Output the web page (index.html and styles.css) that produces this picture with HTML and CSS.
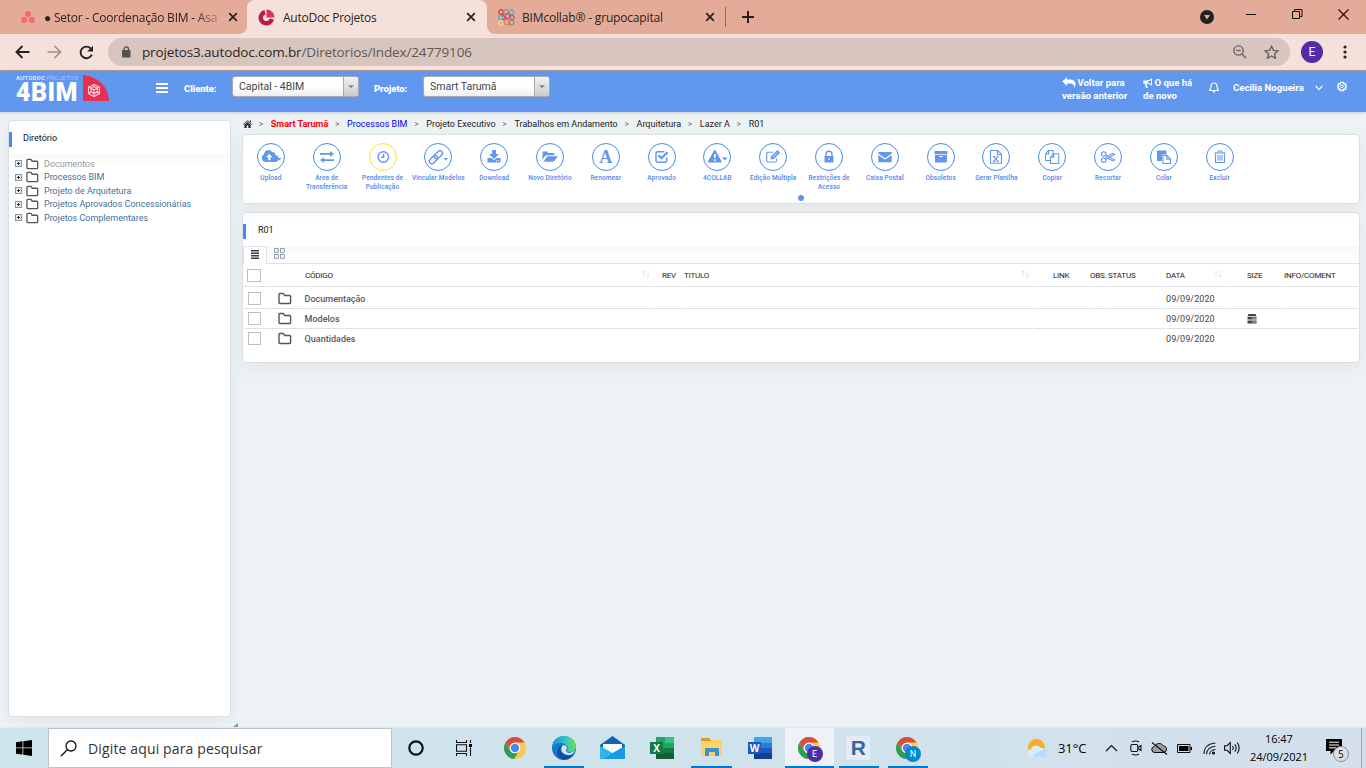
FILE: index.html
```html
<!DOCTYPE html>
<html lang="pt-BR">
<head>
<meta charset="utf-8">
<title>AutoDoc Projetos</title>
<link rel="stylesheet" href="styles.css">
</head>
<body>
<svg class="defs" width="0" height="0">
  <defs>
    <symbol id="folder" viewBox="0 0 14 13"><path d="M1.8 1.5h3.6l1.2 2h5q1 0 1 1v6q0 1-1 1h-9.600q-1 0-1-1v-8q0-1 .8-1z" fill="none" stroke="#555" stroke-width="1.400"/></symbol>
    <symbol id="close" viewBox="0 0 10 10"><path d="M1.2 1.2l7.600 7.600M8.800 1.2L1.2 8.800" stroke="#222" stroke-width="1.700"/></symbol>
    <symbol id="caret" viewBox="0 0 8 5"><path d="M0 0h8L4 4z" fill="currentColor"/></symbol>
    <symbol id="chrome" viewBox="0 0 24 24">
      <circle cx="12" cy="12" r="11" fill="#fbc84b"/>
      <path d="M2.500 6.500A11 11 0 0 1 21.500 6.500H12A5.500 5.500 0 0 0 7 14.500z" fill="#dc4b40"/>
      <path d="M2.500 6.500A11 11 0 0 0 11 23l5-8a5.500 5.500 0 0 1-9-.3z" fill="#24a05a"/>
      <circle cx="12" cy="12" r="5.300" fill="#fff"/><circle cx="12" cy="12" r="4.200" fill="#4687f2"/>
    </symbol>
    <symbol id="sort" viewBox="0 0 8 8"><path d="M2 7V1M.8 2.300L2 1l1.200 1.300M6 1v6M4.800 5.700L6 7l1.200-1.300" fill="none" stroke="#dcdfe2" stroke-width=".8"/></symbol>
  </defs>
</svg>

<div class="tabstrip">
  <div class="tab tab-first">
    <svg width="14" height="12" viewBox="0 0 14 12" fill="#f5696c"><circle cx="7" cy="3" r="3"/><circle cx="3.200" cy="9" r="3"/><circle cx="10.800" cy="9" r="3"/></svg>
    <span class="tab-text t-setor">● Setor - Coordenação BIM - Asa</span>
    <svg width="10" height="10"><use href="#close"/></svg>
  </div>
  <div class="tab tab-active">
    <svg width="17" height="17" viewBox="0 0 17 17"><path d="M7 3.300A5.600 5.600 0 1 0 13.800 10" fill="none" stroke="#b91c4c" stroke-width="4.500"/><path d="M8.500 0.500A8 8 0 0 1 16.500 8.500H8.500z" fill="#e23252"/></svg>
    <span class="tab-text t-auto">AutoDoc Projetos</span>
    <svg width="10" height="10"><use href="#close"/></svg>
  </div>
  <div class="tab tab-third">
    <svg width="17" height="17" viewBox="0 0 17 17" fill="none" stroke-width="1.200"><g stroke="#d6334e"><circle cx="3" cy="3" r="2.300"/><path d="M4 5l4 4-3 2"/></g><g stroke="#7ba05b"><circle cx="8" cy="3" r="2.300"/><circle cx="13.500" cy="13.500" r="2.300"/></g><g stroke="#53aebc"><circle cx="13.500" cy="3" r="2.300"/><circle cx="2.600" cy="8.500" r="2.100"/></g><g stroke="#b75c91"><circle cx="9.500" cy="7" r="2.300"/><circle cx="14" cy="8.500" r="2.100"/></g><g stroke="#f3cf86"><circle cx="3" cy="14" r="2.300"/></g><circle cx="8.500" cy="13" r="2.500" stroke="#ec7068"/></svg>
    <span class="tab-text t-bim">BIMcollab® - grupocapital</span>
    <svg width="10" height="10"><use href="#close"/></svg>
  </div>
  <div class="tab-sep"></div>
  <svg class="newtab" width="12" height="12" viewBox="0 0 12 12"><path d="M6 0v12M0 6h12" stroke="#222" stroke-width="2"/></svg>
  <div class="window-tools">
    <svg width="14" height="14" viewBox="0 0 14 14"><circle cx="7" cy="7" r="7" fill="#222"/><path d="M4 5h6L7 9.500z" fill="#e4ab99"/></svg>
    <svg class="wt-min" width="10" height="10" viewBox="0 0 10 10"><path d="M0 4.500h10" stroke="#111"/></svg>
    <svg class="wt-max" width="11" height="11" viewBox="0 0 11 11" fill="none" stroke="#111"><path d="M.5 2.500h7v7h-7zM2.500 2.500v-2h7.500v7H7.500"/></svg>
    <svg class="wt-close" width="11" height="11" viewBox="0 0 11 11"><path d="M.5.5l10 10M10.500.5l-10 10" stroke="#111" stroke-width="1.100"/></svg>
  </div>
</div>

<div class="navbar">
  <svg width="15" height="14" viewBox="0 0 15 14" fill="none" stroke="#222" stroke-width="1.900"><path d="M7.500 1L1.500 7l6 6M1.500 7H14.500"/></svg>
  <svg class="nb-fwd" width="15" height="14" viewBox="0 0 15 14" fill="none" stroke="#9c9390" stroke-width="1.700"><path d="M7.500 1l6 6-6 6M13.500 7H.5"/></svg>
  <svg class="nb-reload" width="15" height="15" viewBox="0 0 15 15"><path d="M12.800 9.600A5.800 5.800 0 1 1 11.600 3.400" fill="none" stroke="#222" stroke-width="1.900"/><path d="M14 .8v5.800H8.200z" fill="#222"/></svg>
  <div class="omnibox">
    <svg width="9" height="12" viewBox="0 0 9 12"><rect y="4" width="8.500" height="7.500" rx="1" fill="#54514f"/><path d="M2 4.500V3.200a2.250 2.250 0 0 1 4.500 0v1.300" fill="none" stroke="#54514f" stroke-width="1.300"/></svg>
    <span class="url">projetos3.autodoc.com.br<span>/Diretorios/Index/24779106</span></span>
    <svg class="ob-zoom" width="14" height="14" viewBox="0 0 14 14" fill="none" stroke="#6b6461" stroke-width="1.400"><circle cx="5.500" cy="5.500" r="4.600"/><path d="M9 9l4.200 4.200M3.300 5.500h4.400"/></svg>
    <svg width="15" height="14" viewBox="0 0 15 14" fill="none" stroke="#6b6461" stroke-width="1.400"><path d="M7.500 1.300l1.900 4.100 4.500.5-3.400 3 1 4.400-4-2.300-4 2.300 1-4.400-3.400-3 4.500-.5z"/></svg>
  </div>
  <div class="avatar">E</div>
  <svg width="4" height="14" viewBox="0 0 4 14" fill="#222"><circle cx="2" cy="2" r="1.600"/><circle cx="2" cy="7" r="1.600"/><circle cx="2" cy="12" r="1.600"/></svg>
</div>

<header class="app-header">
  <div class="logo">
    <div class="logo-words"><div class="logo-small"><b>AUTODOC</b> PROJETOS</div><div class="logo-big">4BIM</div></div>
    <svg width="26" height="26" viewBox="0 0 26 26"><path d="M0 0Q24 3 26 26H0z" fill="#e5314f"/><g fill="none" stroke="#fbd3da" stroke-width="1.100"><path d="M11 9.500l5.500 2.500v6.500L11 21.500l-5.500-3V12z"/><path d="M8 13l3-1.500 3.300 1.700v3.600L11 18.500l-3-1.700zM8 13l3 2 3.300-1.800M11 15v6.500M5.500 12l2.500 1M16.500 12l-2.200 1.200M5.500 18.500l2.500-1.700M16.500 18.500l-2.200-1.700M11 9.500v2"/></g></svg>
  </div>
  <div class="burger"><i></i><i></i><i></i></div>
  <label class="h-label l-client">Cliente:</label>
  <div class="select"><span>Capital - 4BIM</span><i><svg width="6" height="4"><use href="#caret"/></svg></i></div>
  <label class="h-label l-project">Projeto:</label>
  <div class="select"><span>Smart Tarumã</span><i><svg width="6" height="4"><use href="#caret"/></svg></i></div>
  <div class="h-right">
    <div class="h-link w-back"><svg width="14" height="11" viewBox="0 0 14 11"><path d="M5 0v2.500h3q5.500 0 5.500 4.800 0 1.800-1.300 3.500.2-4.300-4.200-4.300H5V9L.3 4.500z" fill="#fff"/></svg> Voltar para<br>versão anterior</div>
    <div class="h-link w-new"><svg width="10" height="10" viewBox="0 0 10 10"><path d="M9 .2v7.600Q6.500 5.800 4 5.600q-.8 1 .2 2 .3 1.200.8 1.900-1.300.8-2.200.2L2 5.800H.3V2.500h3.500Q6.500 2.200 9 .2z" fill="#fff"/><path d="M8 1.900v4.200Q6.500 5 5 4.800V3.300Q6.500 3 8 1.900z" fill="#6197ef"/></svg> O que há<br>de novo</div>
    <svg class="bell" width="10" height="11" viewBox="0 0 10 11" fill="none" stroke="#fff" stroke-width="1.100"><path d="M.5 8.500Q2 7 2 4q0-3 3-3t3 3q0 3 1.500 4.500zM4 9.500q1 1 2 0"/></svg>
    <span class="user">Cecilia Nogueira</span>
    <svg class="chev" width="8" height="6" viewBox="0 0 8 6"><path d="M.7 1L4 4.600 7.300 1" fill="none" stroke="#fff" stroke-width="1.200"/></svg>
    <svg class="gear" width="10" height="11" viewBox="0 0 11 11" fill="none" stroke="#fff"><path d="M4.200 1h2.600l.5 1.500 1.600-.2 1.200 2-1 1.200 1 1.200-1.200 2-1.600-.2-.5 1.500H4.200l-.5-1.500-1.600.2-1.200-2 1-1.200-1-1.200 1.200-2 1.600.2z" stroke-width="1.500"/><circle cx="5.500" cy="5.500" r="1.500"/></svg>
  </div>
</header>

<main class="content">
  <aside class="panel side">
    <div class="panel-title">Diretório</div>
    <ul class="tree">
      <li class="muted"><b></b><svg width="13" height="12"><use href="#folder"/></svg><span>Documentos</span></li>
      <li><b></b><svg width="13" height="12"><use href="#folder"/></svg><span>Processos BIM</span></li>
      <li><b></b><svg width="13" height="12"><use href="#folder"/></svg><span>Projeto de Arquitetura</span></li>
      <li><b></b><svg width="13" height="12"><use href="#folder"/></svg><span>Projetos Aprovados Concessionárias</span></li>
      <li><b></b><svg width="13" height="12"><use href="#folder"/></svg><span>Projetos Complementares</span></li>
    </ul>
    <i class="grip"></i>
  </aside>

  <section class="work">
    <nav class="crumbs">
      <svg width="9" height="8" viewBox="0 0 9 8"><path d="M4.500.2L9 4.200l-.5.5-4-3.500-4 3.500-.5-.5zM6.800.6h1.200v2.200L6.800 1.800zM1.300 4.700l3.200-2.800 3.200 2.800V8H5.300V5.500H3.700V8H1.300z" fill="#333"/></svg>
      <i>&gt;</i><span class="c-red">Smart Tarumã</span><i>&gt;</i><span class="c-blue">Processos BIM</span><i>&gt;</i><span>Projeto Executivo</span><i>&gt;</i><span>Trabalhos em Andamento</span><i>&gt;</i><span>Arquitetura</span><i>&gt;</i><span>Lazer A</span><i>&gt;</i><span>R01</span>
    </nav>

    <div class="panel actions">
      <div class="action-row">
        <div class="act"><div class="ring"><svg viewBox="0 0 28 28"><path d="M8.200 19a4 4 0 0 1-1.200-7.500 4.500 4.500 0 0 1 8.300-2.300 2.500 2.500 0 0 1 3 3.100A3.300 3.300 0 0 1 18 19z"/><path d="M12.300 10.800l3.200 3.500h-2.100v2.900h-2.200v-2.900H9.100z" fill="#fff"/><path d="M19.800 15h4.800l-2.400 2.400z"/></svg></div>Upload</div>
        <div class="act"><div class="ring"><svg viewBox="0 0 28 28"><path d="M7 10h10V8l4 2.900-4 2.900v-2H7zM21 16.200H11v-2l-4 2.900 4 2.900v-2h10z"/></svg></div>Área de<br>Transferência</div>
        <div class="act"><div class="ring pending"><svg viewBox="0 0 28 28"><circle cx="14.300" cy="14" r="5.200" class="line" stroke-width="1.900"/><path d="M14.600 10.800v3.500h-2.500" class="line"/></svg></div>Pendentes de<br>Publicação</div>
        <div class="act"><div class="ring"><svg viewBox="0 0 28 28"><g transform="rotate(-45 12 14)" class="line"><rect x="3.500" y="11.600" width="9.500" height="5" rx="2.500"/><rect x="10.500" y="11.600" width="9.500" height="5" rx="2.500"/></g><path d="M19.500 15h4.600l-2.300 2.400z"/></svg></div><span class="nw">Vincular Modelos</span></div>
        <div class="act"><div class="ring"><svg viewBox="0 0 28 28"><path d="M12 7h4v4h3l-5 5-5-5h3zM7.500 15h4l2.500 2.300 2.500-2.300h4v4.500h-13z"/><path d="M16 17.800h1M18 17.800h1" stroke="#fff"/></svg></div>Download</div>
        <div class="act"><div class="ring"><svg viewBox="0 0 28 28"><path d="M6.500 17V9.500q0-1 1-1h3.300q1 0 1 1v.5h5.500q1 0 1 1v1.300H11q-1.500 0-2.300 1.200z"/><path d="M7.500 18.800l3-4.500q.7-1 1.700-1h8.800q.8 0 .2 1l-3 3.700q-.7.800-1.500.8z"/></svg></div>Novo Diretório</div>
        <div class="act"><div class="ring letter">A</div>Renomear</div>
        <div class="act"><div class="ring"><svg viewBox="0 0 28 28"><path d="M18.800 14.500v2.900q0 1.800-1.800 1.800H9.800Q8 19.200 8 17.400V10.600q0-1.800 1.800-1.800h6.500" class="line"/><path d="M10.500 12.200l3 3 6-6" class="line thick"/></svg></div>Aprovado</div>
        <div class="act"><div class="ring"><svg viewBox="0 0 28 28"><path d="M11.800 7.500l6.200 11.300H5.600z" stroke="#6197ef" stroke-width="1.500" stroke-linejoin="round"/><path d="M11.800 11v4M11.800 16.300v1.800" stroke="#fff" stroke-width="1.700"/><path d="M19 14.500h5.600l-2.800 2.900z"/></svg></div>4COLLAB</div>
        <div class="act"><div class="ring"><svg viewBox="0 0 28 28"><path d="M17.500 15.500v2q0 1.500-1.500 1.500H9.200q-1.500 0-1.500-1.500v-6.700q0-1.500 1.500-1.500H14" class="line fine"/><path d="M11.500 16.500l.5-3.200L18.500 7l2.700 2.700-6.500 6.300z"/><path d="M13.500 14.300l4.700-4.700" stroke="#fff" stroke-width=".8"/></svg></div><span class="nw">Edição Múltipla</span></div>
        <div class="act"><div class="ring"><svg viewBox="0 0 28 28"><path d="M9.500 13h9v6.500h-9z"/><path d="M11 13v-1.800a3 3 0 0 1 6 0V13" class="line"/><path d="M14 15v2" stroke="#fff"/></svg></div>Restrições de<br>Acesso</div>
        <div class="act"><div class="ring"><svg viewBox="0 0 28 28"><path d="M7.300 9h13.400v1.500L14 15.200l-6.700-4.700zM7.300 12l6.700 4.700 6.700-4.700v7.300H7.300z"/></svg></div>Caixa Postal</div>
        <div class="act"><div class="ring"><svg viewBox="0 0 28 28"><path d="M7.500 8h13v3.300h-13zM8 12h12v7.500H8z"/><path d="M12.500 13.500h3" stroke="#fff"/></svg></div>Obsoletos</div>
        <div class="act"><div class="ring"><svg viewBox="0 0 28 28"><path d="M8.500 7.500h7.200l3.800 3.800v9h-11zM15.500 7.500v4h4" class="line fine"/><path d="M11.700 13.300l4.200 5M15.900 13.300l-4.200 5M10.900 13.200h2.200M14.600 13.200h2.100M10.900 18.500h2.200M14.600 18.500h2.100" class="line fine"/></svg></div><span class="nw">Gerar Planilha</span></div>
        <div class="act"><div class="ring"><svg viewBox="0 0 28 28"><path d="M12.500 17.500H7.500V11l3-3.500h4.500v3.500M10.700 7.500V11H7.500M12.500 20.500v-6.300l3.200-3.400h5v9.700zM15.800 10.800v3.500h-3.300" class="line fine"/></svg></div>Copiar</div>
        <div class="act"><div class="ring"><svg viewBox="0 0 28 28"><g class="line fine"><circle cx="9.700" cy="11" r="2.200"/><circle cx="9.700" cy="17.200" r="2.200"/><path d="M11.600 12l9 5-1.500.9-7.500-3.600M11.600 16.200l9-5-1.500-.9-7.500 3.600"/></g></svg></div>Recortar</div>
        <div class="act"><div class="ring"><svg viewBox="0 0 28 28"><path d="M7 7.500h9.500v4H12V18H7z"/><path d="M13 12.500h4l3.500 3.500v4.500H13zM16.800 12.500v3.700h3.700" class="line fine"/></svg></div>Colar</div>
        <div class="act"><div class="ring"><svg viewBox="0 0 28 28"><path d="M8.500 10h11M9.500 10.200v9.300h9v-9.300M11.700 10l.7-2h3.200l.7 2M12 12v5.500M14 12v5.500M16 12v5.500" class="line fine"/></svg></div>Excluir</div>
      </div>
      <i class="dot"></i>
    </div>

    <div class="panel files">
      <div class="panel-title">R01</div>
      <div class="views">
        <div class="view active"><svg width="9" height="9" viewBox="0 0 9 9"><path d="M0 .8h8M0 3.300h8M0 5.800h8M0 8.200h8" stroke="#333b48" stroke-width="1.600"/></svg></div>
        <svg class="grid-ico" width="11" height="11" viewBox="0 0 11 11" fill="none" stroke="#8c99ad"><path d="M.5.5h3.800v3.800H.5zM6.500.5h3.800v3.800H6.500zM.5 6.500h3.800v3.800H.5zM6.500 6.500h3.800v3.800H6.500z"/></svg>
      </div>
      <div class="row head">
        <div><b class="check"></b></div><div></div><div>CÓDIGO<svg width="8" height="8"><use href="#sort"/></svg></div><div class="rev">REV</div><div>TITULO<svg width="8" height="8"><use href="#sort"/></svg></div><div class="link">LINK</div><div>OBS.</div><div>STATUS</div><div>DATA<svg width="8" height="8"><use href="#sort"/></svg></div><div class="size">SIZE</div><div>INFO/COMENT</div>
      </div>
      <div class="row r1"><div><b class="check"></b></div><div><svg width="14" height="13"><use href="#folder"/></svg></div><div class="name">Documentação</div><div></div><div></div><div></div><div></div><div></div><div class="date">09/09/2020</div><div></div><div></div></div>
      <div class="row r2"><div><b class="check"></b></div><div><svg width="14" height="13"><use href="#folder"/></svg></div><div class="name">Modelos</div><div></div><div></div><div></div><div></div><div></div><div class="date">09/09/2020</div><div class="size"><svg width="10" height="10" viewBox="0 0 10 10"><path d="M1.500 0h7L9.500 2H.5zM.5 2.800h9v2.700h-9zM.5 6.500h9v3h-9z" fill="#444"/><path d="M5 4.200h4M5 8h4" stroke="#bbb"/></svg></div><div></div></div>
      <div class="row r3"><div><b class="check"></b></div><div><svg width="14" height="13"><use href="#folder"/></svg></div><div class="name">Quantidades</div><div></div><div></div><div></div><div></div><div></div><div class="date">09/09/2020</div><div></div><div></div></div>
    </div>
  </section>
</main>

<footer class="taskbar">
  <div class="start"><svg width="16" height="16" viewBox="0 0 16 16"><path d="M0 2.200L6.500 1.300v6.200H0zM7.300 1.200L16 0v7.500H7.300zM0 8.300h6.500v6.300L0 13.700zM7.300 8.300H16V16l-8.700-1.300z"/></svg></div>
  <div class="search"><svg width="17" height="17" viewBox="0 0 17 17" fill="none" stroke="#111" stroke-width="1.300"><circle cx="11" cy="6" r="5"/><path d="M7.500 9.500L.8 16.200"/></svg><span>Digite aqui para pesquisar</span></div>
  <div class="task t48"><svg width="16" height="16" viewBox="0 0 16 16"><circle cx="8" cy="8" r="6.700" fill="none" stroke="#111" stroke-width="2.200"/></svg></div>
  <div class="task"><svg width="17" height="16" viewBox="0 0 17 16"><path d="M.5 0v2.500h10V0M.5 16v-2.500h10V16M.5 4.700h10v6.500H.5zM14.500 0v3M14.500 7.500V16" fill="none" stroke="#111" stroke-width="1.100"/><path d="M13 4h3v3h-3z"/></svg></div>
  <div class="task gap"><svg width="24" height="24"><use href="#chrome"/></svg></div>
  <div class="task open"><svg width="24" height="24" viewBox="0 0 24 24"><defs><linearGradient id="eg"><stop stop-color="#1595cf"/><stop offset=".55" stop-color="#35c4c9"/><stop offset="1" stop-color="#6be052"/></linearGradient></defs><circle cx="12" cy="12" r="12" fill="#1479ca"/><path d="M0 11.500C1 4 6 0 12 0s12 5 12 10.500-7 7-9.500 4.500Q17 13 15 10 12.500 6.500 8 7 3 7.500 0 11.500z" fill="url(#eg)"/><path d="M10 9Q6 17 13 19q6 1.500 9.500-2-4 7.500-12 6.500Q3 21 6 13q1.500-3 4-4z" fill="#134e99"/><path d="M10.500 9.500q4-1 4.500 3-2 2-.3 3.500 3 2.500 8.300-1.500-1 3-4 4.300-5 1-8.500-2.300-2.500-3.300 0-7z" fill="#d6e7ef"/></svg></div>
  <div class="task"><svg width="25" height="24" viewBox="0 0 25 24"><path d="M0 9L12.500 0 25 9v4H0z" fill="#1262af"/><path d="M3 8h19v6l-9.500 5L3 14z" fill="#f5fafd"/><path d="M0 10l12.500 7L25 10v13H0z" fill="#35b3ed"/><path d="M3.500 23L25 10v13z" fill="#199ae0"/></svg></div>
  <div class="task"><svg class="office" width="24" height="22" viewBox="0 0 24 22"><path d="M6 0h18v22H6z" fill="#21a366"/><path d="M15 0h9v6h-9z" fill="#33c481"/><path d="M6 11h18v6H6z" fill="#107c41"/><path d="M6 16h18v6H6z" fill="#185c37"/><path d="M0 5h13v12H0z" fill="#107c41"/><text x="6.500" y="14.500" text-anchor="middle">X</text></svg></div>
  <div class="task open"><svg width="23" height="20" viewBox="0 0 23 20"><path d="M1 0h8l2 2h11v5H1z" fill="#d99b1b"/><path d="M1 3h9l1.500-1H22v16H1z" fill="#fbd265"/><path d="M5 18v-7q0-1 1-1h12q1 0 1 1v7h-4v-4H9v4z" fill="#3a93d5"/></svg></div>
  <div class="task"><svg class="office" width="24" height="22" viewBox="0 0 24 22"><path d="M6 0h18v22H6z" fill="#2b7cd3"/><path d="M6 0h18v6H6z" fill="#41a5ee"/><path d="M6 11h18v6H6z" fill="#185abd"/><path d="M6 16h18v6H6z" fill="#103f91"/><path d="M0 5h13v12H0z" fill="#185abd"/><text x="6.500" y="14.500" text-anchor="middle">W</text></svg></div>
  <div class="task open current"><svg width="24" height="24"><use href="#chrome"/></svg><b class="badge purple">E</b></div>
  <div class="task open"><div class="revit">R</div></div>
  <div class="task open"><svg width="24" height="24"><use href="#chrome"/></svg><b class="badge blue">N</b></div>
  <div class="tray">
    <svg width="22" height="19" viewBox="0 0 22 19"><circle cx="10.500" cy="8.500" r="8.500" fill="#f9ac28"/><path d="M5.500 18.500a4.300 4.300 0 0 1-.5-8.500 5.500 5.500 0 0 1 9.800-1 4 4 0 0 1 5 4.200 3 3 0 0 1-1.500 5.300z" fill="#d7effb"/><path d="M7 18.500q0-5 5-5.500 4-1 6.500-4a4 4 0 0 1 1.300 4.200 3 3 0 0 1-1.500 5.300z" fill="#b5dff7"/></svg>
    <span class="temp">31°C</span>
    <svg class="t-up" width="13" height="8" viewBox="0 0 13 8"><path d="M1 7l5.500-5.500L12 7" fill="none" stroke="#111" stroke-width="1.200"/></svg>
    <svg class="t-cam" width="12" height="16" viewBox="0 0 12 16" fill="none" stroke="#111" stroke-width="1.100"><rect x=".8" y="4.500" width="7" height="7" rx="1.500"/><path d="M8 7.500l3-2v5l-3-2M2 1.800q3.500-1.500 7 0M2 14.200q3.500 1.500 7 0"/></svg>
    <svg class="t-cloud" width="17" height="13" viewBox="0 0 17 13"><path d="M4 10.500a3 3 0 0 1-.5-6 5 5 0 0 1 9-.5 3.300 3.300 0 0 1 .5 6.500z" fill="#9ba0a5" stroke="#111"/><path d="M1 .5l15 12" stroke="#111" stroke-width="1.200"/></svg>
    <svg class="t-bat" width="15" height="9" viewBox="0 0 15 9"><path d="M.5.500h12.500v8H.5z" fill="none" stroke="#111"/><path d="M2 2h9.500v5H2zM13.500 3H15v3h-1.500z"/></svg>
    <svg class="t-wifi" width="13" height="13" viewBox="0 0 13 13" fill="none" stroke="#222" stroke-width="1.100"><path d="M1 12Q1 2 12.500 1M3.500 12.300Q4 5 12.500 4.300M6.500 12.500Q7 8 12.500 7.500"/><circle cx="10.500" cy="11" r="1.600" fill="#111" stroke="none"/></svg>
    <svg class="t-vol" width="17" height="14" viewBox="0 0 17 14" fill="none" stroke="#111" stroke-width="1.100"><path d="M.6 4.700h2.500L6.300 1.500v11L3.100 9.300H.6zM8.500 5q1.500 2 0 4M10.800 3.300q2.700 3.700 0 7.400M13.200 1.500q4 5.500 0 11"/></svg>
    <div class="clock">16:47<br>24/09/2021</div>
    <div class="notes"><svg width="16" height="16" viewBox="0 0 16 16"><path d="M0 0h16v12H8l-3.500 3.500V12H0z"/><path d="M3 3.200h10M3 6h10M3 8.800h7" stroke="#fff"/></svg><b>5</b></div>
    <i class="desk"></i>
  </div>
</footer>
</body>
</html>
```
FILE: styles.css
```css
* { box-sizing: border-box; }
body { margin: 0; width: 1366px; height: 768px; overflow: hidden; display: flex; flex-direction: column; font-family: Roboto, sans-serif; background: #edf2f5; }
svg { flex: none; display: block; }
.defs { position: absolute; }
i, b { font-style: normal; }

.tabstrip { height: 34px; background: linear-gradient(#e4ab99 24px, #f6e1da 24px); display: flex; align-items: center; flex: none; }
.tab { height: 34px; display: flex; align-items: center; font: 12px "Open Sans", sans-serif; color: #2c2220; }
.tab-first { width: 247px; padding-left: 21px; border-radius: 0 0 8px 0; background: #e4ab99; }
.tab-text { white-space: nowrap; }
.t-setor { width: 176px; margin: 0 8px 0 9px; letter-spacing: -.22px; -webkit-mask-image: linear-gradient(90deg, #000 150px, rgba(0,0,0,.2)); mask-image: linear-gradient(90deg, #000 150px, rgba(0,0,0,.2)); }
.tab-active { width: 240px; padding-left: 11px; background: linear-gradient(#e4ab99 12px, #f6e1da 12px); position: relative; }
.tab-active::before { content: ""; position: absolute; inset: 0; border-radius: 8px 8px 0 0; background: #f6e1da; }
.tab-active > * { position: relative; }
.t-auto { width: 175px; margin: 0 8px 0 8px; letter-spacing: -.25px; }
.tab-third { width: 238px; padding-left: 11px; background: #e4ab99; border-radius: 0 0 0 8px; }
.t-bim { width: 175px; margin: 0 8px 0 7px; letter-spacing: -.17px; }
.tab-sep { width: 1px; height: 34px; background: linear-gradient(#e4ab99 7px, #95695b 7px, #95695b 27px, #e4ab99 27px); }
.newtab { box-sizing: content-box; padding: 11px 0 11px 16px; background: #e4ab99; }
.window-tools { flex: 1; height: 34px; background: #e4ab99; display: flex; justify-content: flex-end; align-items: center; padding-right: 17px; }
.wt-min { margin: -4px 0 0 32px; }
.wt-max { margin: -6px 0 0 36px; }
.wt-close { margin: -6px 0 0 35px; }

.navbar { height: 37px; background: #f6e1da; border-bottom: 1px solid #ac9b98; display: flex; align-items: center; padding-left: 15px; flex: none; }
.nb-fwd { margin-left: 17px; }
.nb-reload { margin-left: 17px; }
.omnibox { margin-left: 14px; width: 1182px; height: 28px; border-radius: 14px; background: #d7c5be; display: flex; align-items: center; padding-left: 14px; }
.url { margin-left: 11px; font: 13.500px "Open Sans", sans-serif; letter-spacing: -.15px; color: #2c2725; white-space: nowrap; }
.url span { color: #5f5854; }
.ob-zoom { margin-left: auto; margin-right: 17px; }
.omnibox > svg:last-child { margin-right: 11px; }
.avatar { width: 22px; height: 22px; margin: 0 20px 0 11px; border-radius: 50%; background: #512da8; color: #fff; font: 12px/22px Roboto, sans-serif; text-align: center; }

.app-header { height: 41px; background: #6197ef; display: flex; color: #fff; flex: none; position: relative; box-shadow: 0 1px 3px rgba(0,0,0,.15); }
.logo { width: 94px; margin-left: 16px; display: flex; padding-top: 4px; }
.logo-words { width: 67px; }
.logo-small { font-size: 6px; line-height: 7px; letter-spacing: .2px; color: #a5c4f7; white-space: nowrap; margin-top: -1px; }
.logo-small b { color: #dce8fc; }
.logo-big { font: 900 25px/23px Roboto, sans-serif; letter-spacing: .4px; white-space: nowrap; }
.burger { width: 12px; margin: 12px 0 0 46px; display: flex; flex-direction: column; gap: 2px; }
.burger i { height: 2px; background: #fff; }
.h-label { font-weight: 900; font-size: 9.500px; line-height: 12px; margin-top: 12px; letter-spacing: -.1px; white-space: nowrap; }
.l-client { width: 34px; margin-left: 16px; margin-right: 14px; }
.l-project { width: 34px; margin: 12px 15px 0 15px; }
.select { width: 127px; height: 21px; margin-top: 5px; display: flex; border: 1px solid #a9a9a9; border-radius: 3px; color: #444; font-size: 10.500px; line-height: 20px; background: linear-gradient(#fff, #fff 50%, #eee); overflow: hidden; }
.select span { flex: 1; padding-left: 6px; white-space: nowrap; }
.select i { width: 15px; border-left: 1px solid #a9a9a9; background: linear-gradient(#f2f2f2, #ccc); display: grid; place-items: center; color: #888; }
.h-right { margin-left: auto; display: flex; padding-right: 18px; font-size: 9.600px; font-weight: 700; }
.h-link { line-height: 13px; padding-top: 5px; white-space: nowrap; }
.h-link svg { display: inline; vertical-align: -2px; margin-right: -1px; }
.w-back { width: 81px; }
.w-new { width: 66px; }
.bell { margin-top: 11px; }
.user { margin: 11px 0 0 14px; width: 75px; white-space: nowrap; }
.chev { margin: 14px 0 0 7px; }
.gear { margin: 10px 1px 0 14px; }

.content { height: 615px; display: flex; padding: 0 6px 0 8px; }
.panel { background: #fff; border: 1px solid #dcdfe1; border-radius: 4px; box-shadow: 0 5px 15px rgba(80,100,110,.07); }
.panel-title { font-size: 9px; line-height: 34px; height: 33px; padding-left: 15px; color: #111; background: linear-gradient(#4689f5, #4689f5) 0 11px / 3px 15px no-repeat; }
.side { width: 223px; height: 597px; margin-top: 8px; position: relative; }
.side .panel-title { padding-left: 14px; }
.grip { position: absolute; right: -8px; bottom: -11px; border-left: 5px solid transparent; border-bottom: 4px solid #8b9398; }
.tree { list-style: none; margin: 0; padding: 3px 0 0 6px; background: linear-gradient(#f8f9f9, #fff 12px); }
.tree li { height: 13.500px; display: flex; align-items: center; font-size: 9px; color: #42719b; white-space: nowrap; letter-spacing: -.01px; }
.tree li.muted { color: #999; }
.tree b { width: 7px; height: 7px; border: 1px solid #8a97a5; background: linear-gradient(#333, #333) 1px 2px / 3px 1px no-repeat, linear-gradient(#333, #333) 2px 1px / 1px 3px no-repeat, #e6ebf0; }
.tree svg { margin: 0 5px 0 4px; }

.work { width: 1118px; margin-left: 11px; }
.crumbs { height: 22px; padding: 2px 0 0 1px; display: flex; align-items: center; font-size: 9px; color: #222; white-space: nowrap; }
.crumbs i { width: 18.800px; padding-right: 1px; text-align: center; color: #777; font-size: 8.500px; }
.c-red { color: #f00; font-weight: 700; }
.c-blue { color: #00e; }
.actions { height: 70px; position: relative; }
.action-row { display: flex; padding: 8px 0 0; }
.act { width: 55.820px; flex: none; display: flex; flex-direction: column; align-items: center; text-align: center; font: 500 6.500px/9px Roboto, sans-serif; letter-spacing: .12px; color: #4b89ee; white-space: nowrap; }
.ring { width: 28px; height: 28px; border: 1px solid #4689f5; border-radius: 50%; margin-bottom: 3px; }
.ring svg { width: 28px; height: 28px; margin: -1px; fill: #6197ef; }
.ring .line { fill: none; stroke: #6197ef; stroke-width: 1.400; }
.ring .thick { stroke-width: 2.300; }
.ring .fine { stroke-width: 1.100; }
.ring.pending { border-color: #ffe423; }
.letter { font: 700 18px/26px "Liberation Serif", serif; color: #6197ef; }
.dot { position: absolute; left: 555px; bottom: 2px; width: 6px; height: 6px; border-radius: 50%; background: #5c94f0; }

.files { height: 151px; margin-top: 8px; }
.views { height: 18px; display: flex; border-bottom: 1px solid #dee2e6; background: linear-gradient(#f7f8f8, #fff); }
.view { width: 24px; height: 18px; border: 1px solid #dee2e6; border-bottom: 0; border-radius: 3px 3px 0 0; background: #fff; padding: 3px 0 0 7px; }
.grid-ico { margin: 2px 0 0 7px; }
.row { display: grid; grid-template-columns: 21px 38px 348px 29px 348px 56px 17px 57px 59px 57px 74px; column-gap: 1px; padding-left: 1px; height: 20px; }
.row > div { border-bottom: 1px solid #dee2e6; display: flex; align-items: center; font-size: 9px; color: #444; white-space: nowrap; min-width: 0; }
.row.head { height: 23px; }
.row.head > div { font-size: 8px; letter-spacing: -.2px; color: #222; }
.head > div > svg { margin: 0 3px 2px auto; }
.row > .rev { padding-left: 8px; }
.row > .link { padding-left: 20px; }
.row > .size { padding-left: 21px; }
.row.r1 { height: 22px; }
.row.r1 > div { padding-top: 2px; }
.row.r3 { height: 19px; }
.row.r3 > div { border: 0; }
.check { width: 13px; height: 13px; margin-left: 4px; border: 1px solid #bfbfbf; background: #fff; flex: none; }
.head .check { width: 14px; margin-left: 3px; }
.row > div:nth-child(2) > svg { margin-left: 12px; }
.row > .name { font-weight: 500; color: #5a5a5a; margin-left: -.4px; }
.row > .date { letter-spacing: .08px; }

.taskbar { height: 41px; border-top: 1px solid #e2ecf1; background: linear-gradient(90deg, #cee5ec, #d0e3ec 55%, #d4dfeb); display: flex; font-family: "Open Sans", sans-serif; }
.start { width: 48px; padding: 12px 0 0 16px; }
.search { width: 344px; background: #fff; border: 1px solid #c1c4c7; display: flex; align-items: center; padding-left: 11px; font-size: 14px; color: #333; }
.search span { margin-left: 11px; letter-spacing: .14px; white-space: nowrap; }
.task { width: 49.100px; height: 40px; display: grid; place-items: center; position: relative; flex: none; }
.task.t48 { width: 48px; }
.task.gap { margin-left: 1px; }
.open::after { content: ""; position: absolute; bottom: 0; left: 5px; right: 4px; height: 2px; background: #0078d7; }
.current { background: #edf2f8; }
.current::after { left: 0; right: 0; }
.office text { font: 700 10px "Open Sans", sans-serif; fill: #fff; }
.badge { position: absolute; left: 22px; top: 18px; width: 16px; height: 16px; border-radius: 50%; font: 9px/16px Roboto, sans-serif; color: #fff; text-align: center; }
.purple { background: #512da8; }
.blue { background: #0288d1; }
.revit { width: 24px; height: 24px; background: #e4ebf6; font: 700 21px/24px "Liberation Sans", sans-serif; text-align: center; color: #32679f; }
.tray { flex: 1; display: flex; align-items: center; padding-left: 94px; }
.temp { font-size: 13px; margin-left: 10px; width: 29px; white-space: nowrap; }
.t-up { margin-left: 18px; }
.t-cam { margin-left: 12px; }
.t-cloud { margin-left: 9px; }
.t-bat { margin-left: 9px; }
.t-wifi { margin-left: 11px; }
.t-vol { margin-left: 8px; }
.clock { margin-left: 9px; width: 58px; text-align: center; font-size: 11px; line-height: 18px; letter-spacing: -.05px; white-space: nowrap; }
.notes { margin: -3px 0 0 18px; width: 16px; position: relative; }
.notes b { position: absolute; left: 7px; top: 7px; width: 16px; height: 16px; border-radius: 50%; border: 1px solid #8d9299; background: #dcdfe2; font: 10px/14px "Open Sans", sans-serif; text-align: center; }
.desk { margin-left: auto; margin-right: 4px; width: 1px; height: 40px; background: #9fa8b1; }
```
